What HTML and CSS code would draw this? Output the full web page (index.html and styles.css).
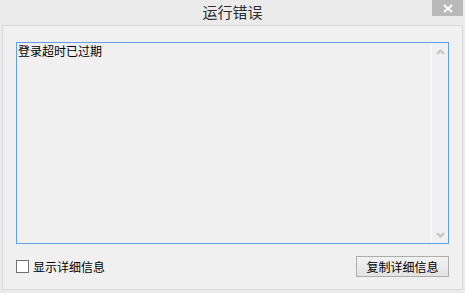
FILE: index.html
```html
<!DOCTYPE html>
<html lang="zh-CN">
<head>
  <meta charset="UTF-8">
  <title>运行错误</title>
  <link rel="stylesheet" href="styles.css">
</head>
<body>
  <div class="titlebar">
    <span></span>
    <span class="title">运行错误</span>
    <span class="close-btn">
      <svg width="10" height="9" viewBox="0 0 10 9">
        <path d="M1 1 L9 8 M9 1 L1 8" stroke="#fff" stroke-width="2" fill="none"/>
      </svg>
    </span>
  </div>

  <div class="panel">
    <div class="message-box">
      <div class="message-text">登录超时已过期</div>
      <div class="scrollbar">
        <svg width="9" height="6" viewBox="0 0 9 6">
          <path d="M1 5 L4.5 1.5 L8 5" stroke="#c3c3c3" stroke-width="2" fill="none"/>
        </svg>
        <svg width="9" height="6" viewBox="0 0 9 6">
          <path d="M1 1 L4.5 4.5 L8 1" stroke="#c3c3c3" stroke-width="2" fill="none"/>
        </svg>
      </div>
    </div>

    <div class="footer">
      <label class="check">
        <span class="check-box"></span>
        显示详细信息
      </label>
      <button class="copy-btn">复制详细信息</button>
    </div>
  </div>
</body>
</html>
```

FILE: styles.css
```css
body {
  margin: 0;
  background: #ebebeb;
  font-family: "Noto Sans CJK SC", "Noto Sans", sans-serif;
  color: #000;
  width: 465px;
  height: 293px;
  overflow: hidden;
}

.titlebar {
  display: grid;
  grid-template-columns: 1fr auto 1fr;
  height: 25px;
}

.title {
  font-size: 15px;
  line-height: 24px;
  color: #2b2b2b;
}

.close-btn {
  justify-self: end;
  align-self: start;
  width: 31px;
  height: 16px;
  margin-right: 2px;
  background: #b9b9b9;
  display: flex;
  align-items: center;
  justify-content: center;
}

.panel {
  margin: 0 2px 3px 2px;
  height: 265px;
  box-sizing: border-box;
  border: 1px solid #d9d9d9;
  background: #f0f0f0;
  padding: 16px 13px 12px 13px;
  display: flex;
  flex-direction: column;
  gap: 12px;
}

.message-box {
  height: 202px;
  box-sizing: border-box;
  border: 1px solid #5fa0e6;
  display: flex;
}

.message-text {
  flex: 1;
  font-size: 12px;
  line-height: 14px;
  padding: 1px 1px;
}

.scrollbar {
  width: 16px;
  border-left: 1px solid #fbfbfb;
  display: flex;
  flex-direction: column;
  justify-content: space-between;
  align-items: center;
  padding: 6px 0 5px 0;
}

.footer {
  display: flex;
  align-items: center;
  justify-content: space-between;
  height: 21px;
}

.check {
  display: flex;
  align-items: center;
  gap: 4px;
  font-size: 12px;
}

.check-box {
  width: 13px;
  height: 13px;
  box-sizing: border-box;
  border: 1px solid #707070;
  background: #fff;
}

.copy-btn {
  width: 93px;
  height: 21px;
  padding: 0;
  border: 1px solid #adadad;
  background: linear-gradient(#f2f2f2, #e3e3e3);
  font-family: "Noto Sans CJK SC", sans-serif;
  font-size: 12px;
  color: #000;
}
```
